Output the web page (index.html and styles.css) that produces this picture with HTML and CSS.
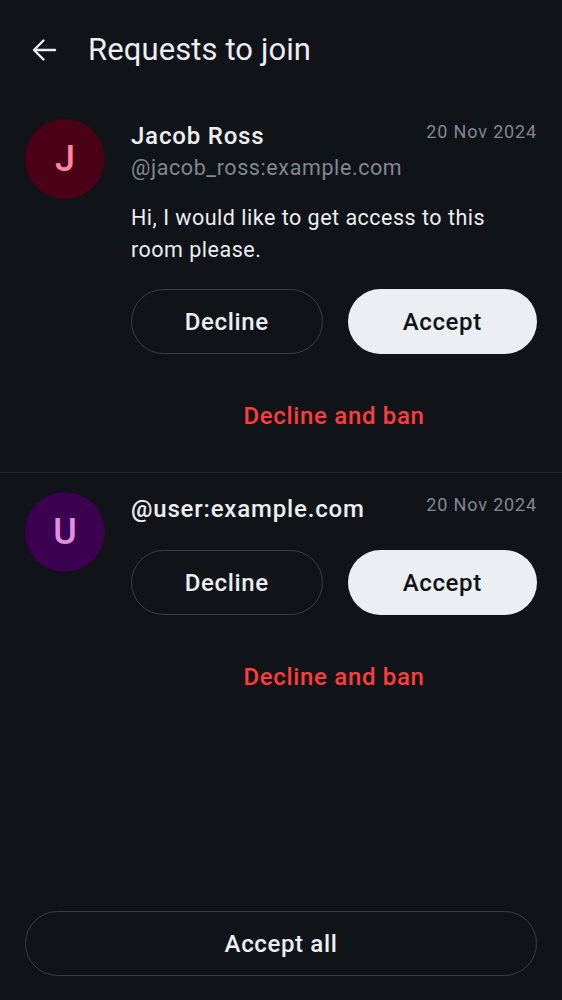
FILE: index.html
```html
<!DOCTYPE html>
<html>
<head>
<meta charset="utf-8">
<link rel="stylesheet" href="styles.css">
</head>
<body>
<div class="screen">
  <header class="topbar">
    <svg class="back" width="26" height="26" viewBox="0 0 26 26"><path d="M24 13H3M12.5 3.5L3 13l9.5 9.5" fill="none" stroke="#ebeef2" stroke-width="2.4" stroke-linecap="round" stroke-linejoin="round"/></svg>
    <h1 class="title">Requests to join</h1>
  </header>

  <div class="item first">
    <div class="avatar av-j">J</div>
    <div class="content">
      <div class="head">
        <div class="name">Jacob Ross</div>
        <div class="date">20 Nov 2024</div>
      </div>
      <div class="handle">@jacob_ross:example.com</div>
      <div class="message">Hi, I would like to get access to this room please.</div>
      <div class="actions">
        <button class="btn outline">Decline</button>
        <button class="btn filled">Accept</button>
      </div>
      <button class="ban">Decline and ban</button>
    </div>
  </div>

  <div class="item">
    <div class="avatar av-u">U</div>
    <div class="content">
      <div class="head">
        <div class="name">@user:example.com</div>
        <div class="date">20 Nov 2024</div>
      </div>
      <div class="actions spaced">
        <button class="btn outline">Decline</button>
        <button class="btn filled">Accept</button>
      </div>
      <button class="ban">Decline and ban</button>
    </div>
  </div>

  <div class="footer">
    <button class="btn outline wide">Accept all</button>
  </div>
</div>
</body>
</html>
```

FILE: styles.css
```css
* { box-sizing: border-box; }
html, body { margin: 0; padding: 0; background: #101318; }
body { font-family: Roboto, "Noto Sans", sans-serif; color: #ebeef2; }
.screen { width: 562px; height: 1000px; display: flex; flex-direction: column; }
.topbar { height: 100px; display: flex; align-items: center; padding-left: 31px; gap: 31px; }
.back { display: block; }
.title { margin: 0; font-size: 31px; font-weight: 400; line-height: 40px; letter-spacing: 0.1px; color: #ebeef2; }
.item { display: flex; align-items: flex-start; gap: 26px; padding: 19px 25px 28px; }
.item.first { border-bottom: 1px solid #1f2329; }
.avatar { width: 80px; height: 80px; border-radius: 50%; flex: none; display: flex; align-items: center; justify-content: center; font-size: 36px; font-weight: 500; font-family: "Roboto Medium", Roboto, sans-serif; }
.av-j { background: #4a0016; color: #ff86a3; }
.av-u { background: #3c0050; color: #e18fe0; }
.content { flex: 1; min-width: 0; display: flex; flex-direction: column; padding-top: 1px; }
.head { display: flex; justify-content: space-between; align-items: flex-start; }
.name { font-family: "Roboto Medium", Roboto, sans-serif; font-size: 24px; font-weight: 500; line-height: 32px; letter-spacing: 0.8px; color: #ebeef2; }
.date { font-size: 18px; line-height: 24px; letter-spacing: 0.85px; color: #818891; }
.handle { font-size: 21.5px; line-height: 32px; letter-spacing: 0.6px; color: #818891; }
.message { font-size: 21.5px; line-height: 32px; letter-spacing: 0.5px; margin-top: 18px; color: #ebeef2; }
.actions { display: flex; gap: 25px; margin-top: 23px; }
.actions.spaced { margin-top: 25px; }
.btn { font-family: "Roboto Medium", Roboto, sans-serif; font-size: 24px; font-weight: 500; letter-spacing: 0.6px; height: 65px; border-radius: 33px; flex: 1; cursor: pointer; }
.outline { background: transparent; border: 1.5px solid #3b3f45; color: #ebeef2; }
.filled { background: #ebeef2; border: none; color: #101318; }
.ban { font-family: "Roboto Medium", Roboto, sans-serif; background: none; border: none; color: #ff3d3d; font-size: 24px; font-weight: 500; letter-spacing: 0.65px; height: 56px; margin-top: 34px; padding: 0; }
.footer { margin-top: auto; padding: 0 25px 24px; display: flex; }
.wide { flex: 1; }
```
